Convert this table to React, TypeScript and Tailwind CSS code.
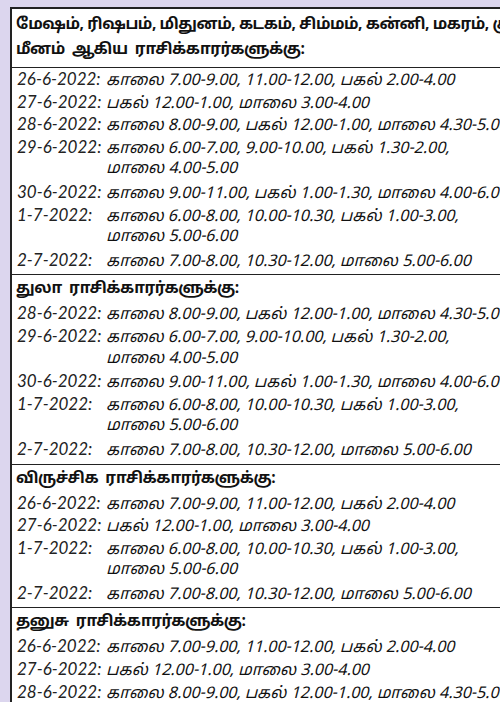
type Row = { date?: string; text: string };
type Section = { title: string[]; rows: Row[]; underline?: boolean };

const sections: Section[] = [
  {
    title: [
      "மேஷம், ரிஷபம், மிதுனம், கடகம், சிம்மம், கன்னி, மகரம், கும்பம்,",
      "மீனம்  ஆகிய  ராசிக்காரர்களுக்கு:",
    ],
    underline: true,
    rows: [
      { date: "26-6-2022:", text: "காலை 7.00-9.00, 11.00-12.00, பகல் 2.00-4.00" },
      { date: "27-6-2022:", text: "பகல் 12.00-1.00, மாலை 3.00-4.00" },
      { date: "28-6-2022:", text: "காலை 8.00-9.00, பகல் 12.00-1.00, மாலை 4.30-5.00" },
      { date: "29-6-2022:", text: "காலை 6.00-7.00, 9.00-10.00, பகல் 1.30-2.00," },
      { text: "மாலை 4.00-5.00" },
      { date: "30-6-2022:", text: "காலை 9.00-11.00, பகல் 1.00-1.30, மாலை 4.00-6.00" },
      { date: "1-7-2022:", text: "காலை 6.00-8.00, 10.00-10.30, பகல் 1.00-3.00," },
      { text: "மாலை 5.00-6.00" },
      { date: "2-7-2022:", text: "காலை 7.00-8.00, 10.30-12.00, மாலை 5.00-6.00" },
    ],
  },
  {
    title: ["துலா  ராசிக்காரர்களுக்கு:"],
    rows: [
      { date: "28-6-2022:", text: "காலை 8.00-9.00, பகல் 12.00-1.00, மாலை 4.30-5.00" },
      { date: "29-6-2022:", text: "காலை 6.00-7.00, 9.00-10.00, பகல் 1.30-2.00," },
      { text: "மாலை 4.00-5.00" },
      { date: "30-6-2022:", text: "காலை 9.00-11.00, பகல் 1.00-1.30, மாலை 4.00-6.00" },
      { date: "1-7-2022:", text: "காலை 6.00-8.00, 10.00-10.30, பகல் 1.00-3.00," },
      { text: "மாலை 5.00-6.00" },
      { date: "2-7-2022:", text: "காலை 7.00-8.00, 10.30-12.00, மாலை 5.00-6.00" },
    ],
  },
  {
    title: ["விருச்சிக  ராசிக்காரர்களுக்கு:"],
    rows: [
      { date: "26-6-2022:", text: "காலை 7.00-9.00, 11.00-12.00, பகல் 2.00-4.00" },
      { date: "27-6-2022:", text: "பகல் 12.00-1.00, மாலை 3.00-4.00" },
      { date: "1-7-2022:", text: "காலை 6.00-8.00, 10.00-10.30, பகல் 1.00-3.00," },
      { text: "மாலை 5.00-6.00" },
      { date: "2-7-2022:", text: "காலை 7.00-8.00, 10.30-12.00, மாலை 5.00-6.00" },
    ],
  },
  {
    title: ["தனுசு  ராசிக்காரர்களுக்கு:"],
    rows: [
      { date: "26-6-2022:", text: "காலை 7.00-9.00, 11.00-12.00, பகல் 2.00-4.00" },
      { date: "27-6-2022:", text: "பகல் 12.00-1.00, மாலை 3.00-4.00" },
      { date: "28-6-2022:", text: "காலை 8.00-9.00, பகல் 12.00-1.00, மாலை 4.30-5.00" },
    ],
  },
];

const fontStack = {
  fontFamily: '"Noto Sans Tamil", "Lohit Tamil", "Noto Sans", "Liberation Sans", sans-serif',
};

const App = () => {
  return (
    <div className="w-[500px] h-[702px] overflow-hidden bg-[#dcd6ee] pl-[10px] pt-[7px]" style={fontStack}>
      <div className="bg-white border-l-2 border-t-2 border-[#222] h-full text-[#111]">
        {sections.map((s, i) => (
          <div key={i} className={i > 0 ? "border-t-[1.5px] border-[#222] pb-[3px]" : "pb-[3px]"}>
            <div
              className={`px-[4px] font-bold text-[15.5px] tracking-[-0.45px] whitespace-pre ${
                s.underline ? "border-b-[1.5px] border-[#222] pt-[4px] pb-[4px]" : "pt-[2px]"
              }`}
            >
              {s.title.map((t) => (
                <div key={t} className="h-[25px] leading-[25px]">{t}</div>
              ))}
            </div>
            {s.rows.map((r, j) => (
              <div key={j} className="flex items-baseline whitespace-nowrap italic text-[16px] h-[22.6px] leading-[22.6px] px-[5px]">
                <span className="w-[89px] shrink-0 text-[17px] text-[#222]" style={{ fontFamily: '"Lato", "Open Sans", sans-serif' }}>
                  {r.date}
                </span>
                <span>{r.text}</span>
              </div>
            ))}
          </div>
        ))}
      </div>
    </div>
  );
};

export default App;
